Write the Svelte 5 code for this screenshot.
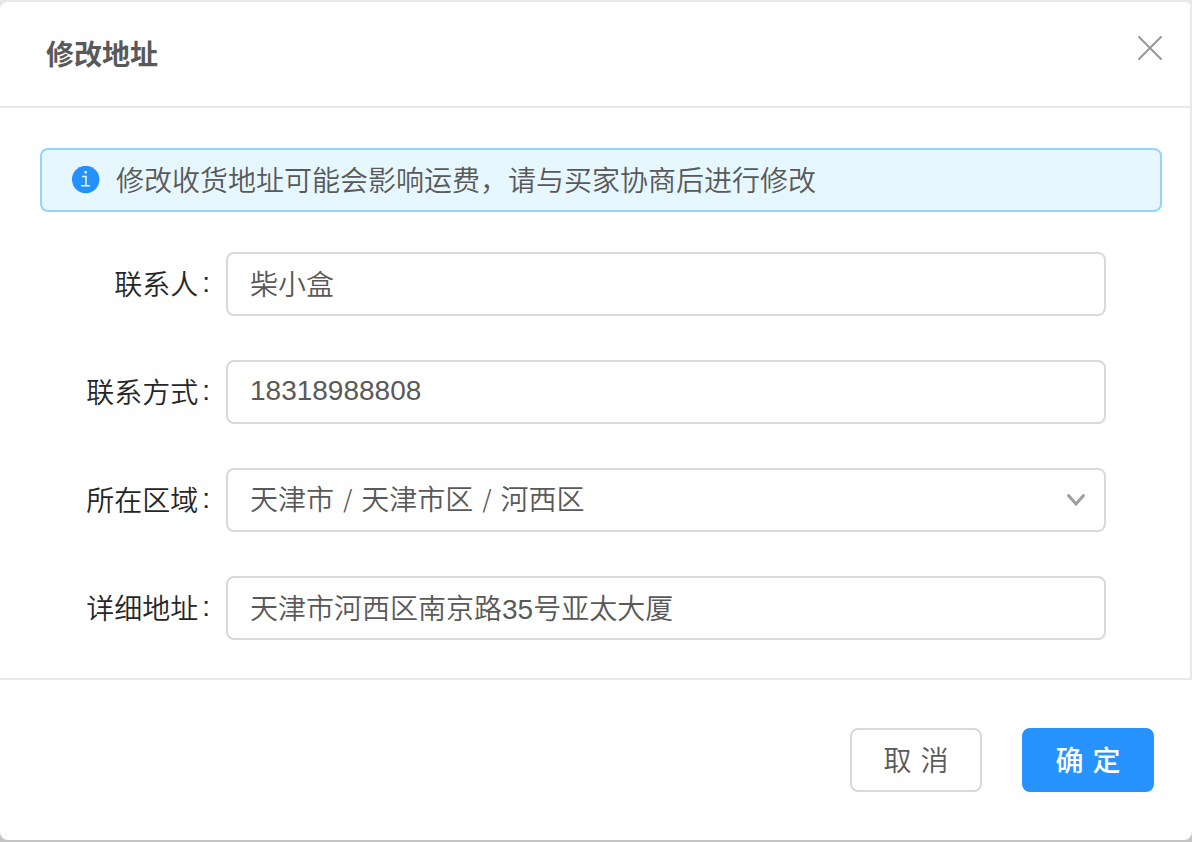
<script>
  let contact = $state('柴小盒');
  let phone = $state('18318988808');
  let region = $state('天津市 / 天津市区 / 河西区');
  let address = $state('天津市河西区南京路35号亚太大厦');
</script>

<div class="page" lang="zh-CN">
  <div class="dialog" role="dialog" aria-labelledby="dialog-title">
    <header>
      <h1 id="dialog-title">修改地址</h1>
      <button class="close" type="button" aria-label="关闭">
        <svg width="28" height="28" viewBox="0 0 28 28" fill="none" stroke="#98989c" stroke-width="2" stroke-linecap="round">
          <path d="M3 3 L25 25 M25 3 L3 25" />
        </svg>
      </button>
    </header>

    <form id="address-form">
      <div class="notice">
        <svg width="28" height="28" viewBox="0 0 28 28">
          <circle cx="13.7" cy="13.5" r="13.7" fill="#2590ff" />
          <rect x="12.5" y="5" width="2.4" height="2.4" fill="#e6f7ff" />
          <path d="M10 10.5 H14 V19.8 M9 19.8 H18" fill="none" stroke="#e6f7ff" stroke-width="1.6" />
        </svg>
        <p>修改收货地址可能会影响运费，请与买家协商后进行修改</p>
      </div>

      <div class="fields">
        <div class="row">
          <label for="contact">联系人<span>:</span></label>
          <input id="contact" type="text" bind:value={contact} />
        </div>
        <div class="row">
          <label for="phone">联系方式<span>:</span></label>
          <input id="phone" type="tel" bind:value={phone} />
        </div>
        <div class="row">
          <label for="region">所在区域<span>:</span></label>
          <div class="select">
            <select id="region" bind:value={region}>
              <option>天津市 / 天津市区 / 河西区</option>
            </select>
            <svg width="20" height="14" viewBox="0 0 20 14" fill="none" stroke="#9c9ca2" stroke-width="3" stroke-linecap="round">
              <path d="M2.5 2.5 L10 11 L17.5 2.5" />
            </svg>
          </div>
        </div>
        <div class="row">
          <label for="address">详细地址<span>:</span></label>
          <input id="address" type="text" bind:value={address} />
        </div>
      </div>
    </form>

    <footer>
      <button class="action" type="button">取 消</button>
      <button class="action primary" type="submit" form="address-form">确 定</button>
    </footer>
  </div>
</div>

<style>
  :global(body) {
    margin: 0;
    background: #c4c4c4;
  }

  .page {
    box-sizing: border-box;
    min-height: 100vh;
    padding: 2px 0;
    background: linear-gradient(#e8e8e8 50%, #c4c4c4 50%);
    font-family: Roboto, "Noto Sans CJK SC", sans-serif;
    font-size: 28px;
    font-weight: 350;
    line-height: 40px;
    color: #595959;
  }

  .dialog {
    overflow: hidden;
    border-radius: 8px;
    background: #fff;
  }

  header {
    display: flex;
    align-items: flex-start;
    justify-content: space-between;
    padding: 32px 26px 30px 46px;
    border-right: 2px solid #e8e8e8;
    border-bottom: 2px solid #e8e8e8;
  }

  h1 {
    margin: 0;
    padding-top: 2px;
    font-size: 28px;
    font-weight: 700;
  }

  button,
  input,
  select {
    font: inherit;
    color: inherit;
  }

  .close {
    display: flex;
    margin: 0;
    padding: 0;
    border: 0;
    background: none;
  }

  form {
    padding: 40px 28px 38px 40px;
    border-right: 2px solid #e8e8e8;
    border-bottom: 2px solid #e8e8e8;
  }

  .notice {
    display: flex;
    align-items: center;
    gap: 16px;
    padding: 8px 30px;
    border: 2px solid #91d5ff;
    border-radius: 8px;
    background: #e6f7ff;
  }

  .notice svg {
    flex: none;
  }

  .notice p {
    margin: 0;
    padding-top: 4px;
  }

  .fields {
    display: grid;
    gap: 44px;
    margin-top: 40px;
    padding-right: 56px;
  }

  .row {
    display: grid;
    grid-template-columns: 186px 1fr;
    align-items: center;
  }

  label {
    padding: 4px 16px 0 0;
    color: #262626;
    text-align: right;
  }

  label span {
    margin-left: 4px;
    font-family: "Liberation Sans", sans-serif;
    line-height: 1;
    vertical-align: 3px;
  }

  input,
  select {
    box-sizing: border-box;
    width: 100%;
    height: 64px;
    margin: 0;
    padding: 0 22px 2px;
    border: 2px solid #d9d9d9;
    border-radius: 8px;
    background: #fff;
    outline: none;
    font-family: "Liberation Sans", "Noto Sans CJK SC", sans-serif;
  }

  .select {
    display: grid;
    align-items: center;
  }

  .select > * {
    grid-area: 1 / 1;
  }

  select {
    appearance: none;
    padding: 2px 22px 0;
    font-family: "DejaVu Sans", "Noto Sans CJK SC", sans-serif;
  }

  .select svg {
    justify-self: end;
    margin-right: 20px;
    pointer-events: none;
  }

  footer {
    display: flex;
    justify-content: flex-end;
    gap: 40px;
    padding: 48px 38px;
  }

  .action {
    width: 132px;
    height: 64px;
    padding: 4px 0 0;
    border: 2px solid #d9d9d9;
    border-radius: 8px;
    background: #fff;
    font-family: "DejaVu Sans", "Noto Sans CJK SC", sans-serif;
  }

  .primary {
    border-color: #2693ff;
    background: #2693ff;
    color: #fff;
    font-weight: 500;
  }
</style>
